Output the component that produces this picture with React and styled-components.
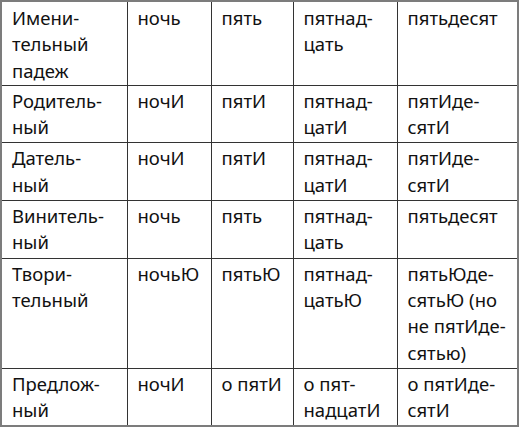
import React from "react";
import styled, { createGlobalStyle } from "styled-components";

const GlobalStyle = createGlobalStyle`
  html, body {
    margin: 0;
    padding: 0;
    background: #fff;
  }
  body {
    font-family: "Noto Sans", "DejaVu Sans", sans-serif;
    color: #111;
  }
`;

const Table = styled.table`
  width: 519px;
  border-collapse: collapse;
  table-layout: fixed;
  border: 2px solid #7c7c7c;
`;

const Td = styled.td`
  border: 1px solid #333;
  padding: ${(p) => (p.first ? "3px 4px 1px 10px" : "2px 4px 2px 10px")};
  vertical-align: top;
  font-size: 18.5px;
  white-space: nowrap;
`;

const Line = styled.span`
  display: block;
  height: 26.3px;
  line-height: 26.3px;
`;

const cols = [126, 84, 82, 104, 121];

const rows = [
  [["Имени-", "тельный", "падеж"], ["ночь"], ["пять"], ["пятнад-", "цать"], ["пятьдесят"]],
  [["Родитель-", "ный"], ["ночИ"], ["пятИ"], ["пятнад-", "цатИ"], ["пятИде-", "сятИ"]],
  [["Датель-", "ный"], ["ночИ"], ["пятИ"], ["пятнад-", "цатИ"], ["пятИде-", "сятИ"]],
  [["Винитель-", "ный"], ["ночь"], ["пять"], ["пятнад-", "цать"], ["пятьдесят"]],
  [
    ["Твори-", "тельный"],
    ["ночьЮ"],
    ["пятьЮ"],
    ["пятнад-", "цатьЮ"],
    ["пятьЮде-", "сятьЮ (но", "не пятИде-", "сятью)"],
  ],
  [["Предлож-", "ный"], ["ночИ"], ["о пятИ"], ["о пят-", "надцатИ"], ["о пятИде-", "сятИ"]],
];

export default function App() {
  return (
    <>
      <GlobalStyle />
      <Table>
        <colgroup>
          {cols.map((w, i) => (
            <col key={i} style={{ width: w }} />
          ))}
        </colgroup>
        <tbody>
          {rows.map((row, i) => (
            <tr key={i}>
              {row.map((lines, j) => (
                <Td key={j} first={i === 0}>
                  {lines.map((l, k) => (
                    <Line key={k}>{l}</Line>
                  ))}
                </Td>
              ))}
            </tr>
          ))}
        </tbody>
      </Table>
    </>
  );
}
